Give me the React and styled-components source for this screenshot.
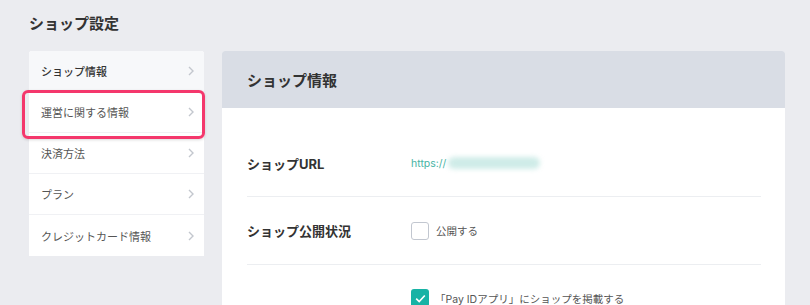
import React from 'react';
import styled, { createGlobalStyle } from 'styled-components';

const GlobalStyle = createGlobalStyle`
    body {
        margin: 0;
        background: #ebecf0;
        font-family: Inter, "Noto Sans CJK JP", sans-serif;
        color: #333;
    }
`;

const Page = styled.div`
    padding: 14px 25px 0 29px;
    height: 305px;
    box-sizing: border-box;
    overflow: hidden;
`;

const Title = styled.h1`
    margin: 0 0 17px;
    font-size: 15px;
    line-height: 20px;
    font-weight: 700;
    color: #333;
`;

const Layout = styled.div`
    display: grid;
    grid-template-columns: 175px 1fr;
    gap: 18px;
    align-items: start;
`;

const Sidebar = styled.nav`
    background: #fff;
    border-radius: 3px;
`;

const NavItem = styled.div`
    position: relative;
    display: flex;
    align-items: center;
    justify-content: space-between;
    height: 41px;
    padding: 0 10px 0 12px;
    box-sizing: border-box;
    font-size: 11px;
    color: ${(p) => (p.$active ? '#333' : '#555')};
    font-weight: ${(p) => (p.$active ? 500 : 400)};
    background: ${(p) => (p.$active ? '#f7f8fa' : '#fff')};
    border-bottom: 1px solid #f0f1f4;
    &:first-child {
        border-radius: 3px 3px 0 0;
    }
    &:last-child {
        border-bottom: none;
    }
    ${(p) =>
        p.$marked &&
        `
        z-index: 1;
        &::after {
            content: '';
            position: absolute;
            top: -2px;
            left: -7px;
            right: -1px;
            bottom: -7px;
            border: 3px solid #f4376c;
            border-radius: 6px;
            box-shadow: 0 1px 3px rgba(0, 0, 0, 0.15);
        }
    `}
`;

const Panel = styled.section`
    background: #fff;
    border-radius: 3px 3px 0 0;
    min-height: 260px;
`;

const PanelHeader = styled.div`
    height: 57px;
    display: flex;
    align-items: center;
    padding-left: 25px;
    background: #d9dde5;
    border-radius: 3px 3px 0 0;
    font-size: 15px;
    font-weight: 700;
    color: #333;
`;

const PanelBody = styled.div`
    padding: 22px 24px 0 25px;
`;

const Row = styled.div`
    display: grid;
    grid-template-columns: 164px 1fr;
    align-items: center;
    height: ${(p) => p.$h || 67}px;
    border-bottom: ${(p) => (p.$last ? 'none' : '1px solid #eceef1')};
    ${(p) => p.$last && 'align-items: start; padding-top: 24px; box-sizing: border-box;'}
`;

const Label = styled.div`
    font-size: 13px;
    font-weight: 700;
    color: #333;
`;

const Url = styled.div`
    font-size: 10.5px;
    color: #47b4a4;
    display: flex;
    align-items: center;
`;

const Blur = styled.span`
    display: inline-block;
    width: 92px;
    height: 12px;
    margin-left: 2px;
    border-radius: 6px;
    background: #cfece8;
    filter: blur(2.5px);
`;

const Check = styled.label`
    display: flex;
    align-items: center;
    gap: ${(p) => (p.$bracket ? 6 : 7)}px;
    font-size: 10.5px;
    color: #555;
`;

const Box = styled.span`
    width: 18px;
    height: 18px;
    box-sizing: border-box;
    border-radius: 3px;
    border: ${(p) => (p.$on ? 'none' : '1.5px solid #c2c7d0')};
    background: ${(p) => (p.$on ? '#17b3a5' : '#fff')};
    display: flex;
    align-items: center;
    justify-content: center;
`;

const Chevron = () => (
    <svg width="6" height="10" viewBox="0 0 6 10">
        <path d="M1 1l4 4-4 4" fill="none" stroke="#c3c7ce" strokeWidth="1.4" />
    </svg>
);

const menu = ['ショップ情報', '運営に関する情報', '決済方法', 'プラン', 'クレジットカード情報'];

const App = () => (
    <>
        <GlobalStyle />
        <Page>
            <Title>ショップ設定</Title>
            <Layout>
                <Sidebar>
                    {menu.map((m, i) => (
                        <NavItem key={m} $active={i === 0} $marked={i === 1}>
                            {m}
                            <Chevron />
                        </NavItem>
                    ))}
                </Sidebar>
                <Panel>
                    <PanelHeader>ショップ情報</PanelHeader>
                    <PanelBody>
                        <Row $h={66}>
                            <Label>ショップURL</Label>
                            <Url>
                                https://
                                <Blur />
                            </Url>
                        </Row>
                        <Row>
                            <Label>ショップ公開状況</Label>
                            <Check>
                                <Box />
                                公開する
                            </Check>
                        </Row>
                        <Row $last $h={60}>
                            <div />
                            <Check $bracket>
                                <Box $on>
                                    <svg width="11" height="9" viewBox="0 0 11 9">
                                        <path d="M1.2 4.6l3 3L9.8 1.5" fill="none" stroke="#fff" strokeWidth="1.6" />
                                    </svg>
                                </Box>
                                「Pay IDアプリ」にショップを掲載する
                            </Check>
                        </Row>
                    </PanelBody>
                </Panel>
            </Layout>
        </Page>
    </>
);

export default App;
